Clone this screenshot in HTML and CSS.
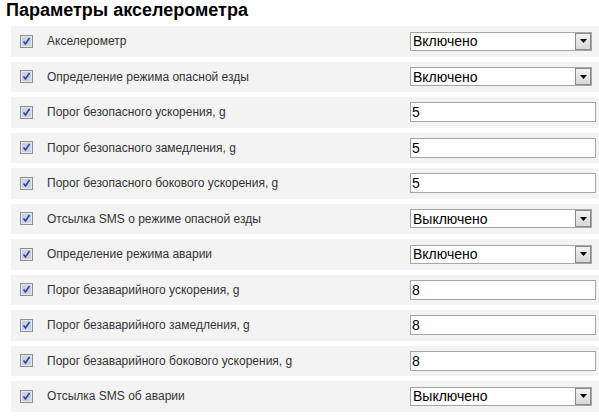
FILE: index.html
```html
<!DOCTYPE html>
<html lang="ru">

<head>
    <meta charset="UTF-8">
    <title>Параметры акселерометра</title>
    <link rel="stylesheet" href="styles.css">
</head>

<body>
    <h1>Параметры акселерометра</h1>

    <div class="params">
        <div class="row">
            <span class="check"><svg width="13" height="13" viewBox="0 0 13 13"><rect x="0.5" y="0.5" width="12" height="12" fill="#e4e7ec" stroke="#8c8f94"/><rect x="2" y="2" width="9" height="9" fill="#ccd2dc"/><path d="M3.5 6.5 L5.5 9 L9.5 3" fill="none" stroke="#2a3fb5" stroke-width="1.6"/></svg></span>
            <span class="label">Акселерометр</span>
            <div class="select"><span>Включено</span><span class="arrow"><svg width="7" height="4" viewBox="0 0 7 4"><path d="M0 0 H7 L3.5 4 Z" fill="#000"/></svg></span></div>
        </div>
        <div class="row">
            <span class="check"><svg width="13" height="13" viewBox="0 0 13 13"><rect x="0.5" y="0.5" width="12" height="12" fill="#e4e7ec" stroke="#8c8f94"/><rect x="2" y="2" width="9" height="9" fill="#ccd2dc"/><path d="M3.5 6.5 L5.5 9 L9.5 3" fill="none" stroke="#2a3fb5" stroke-width="1.6"/></svg></span>
            <span class="label">Определение режима опасной езды</span>
            <div class="select"><span>Включено</span><span class="arrow"><svg width="7" height="4" viewBox="0 0 7 4"><path d="M0 0 H7 L3.5 4 Z" fill="#000"/></svg></span></div>
        </div>
        <div class="row">
            <span class="check"><svg width="13" height="13" viewBox="0 0 13 13"><rect x="0.5" y="0.5" width="12" height="12" fill="#e4e7ec" stroke="#8c8f94"/><rect x="2" y="2" width="9" height="9" fill="#ccd2dc"/><path d="M3.5 6.5 L5.5 9 L9.5 3" fill="none" stroke="#2a3fb5" stroke-width="1.6"/></svg></span>
            <span class="label">Порог безопасного ускорения, g</span>
            <input class="field" type="text" value="5">
        </div>
        <div class="row">
            <span class="check"><svg width="13" height="13" viewBox="0 0 13 13"><rect x="0.5" y="0.5" width="12" height="12" fill="#e4e7ec" stroke="#8c8f94"/><rect x="2" y="2" width="9" height="9" fill="#ccd2dc"/><path d="M3.5 6.5 L5.5 9 L9.5 3" fill="none" stroke="#2a3fb5" stroke-width="1.6"/></svg></span>
            <span class="label">Порог безопасного замедления, g</span>
            <input class="field" type="text" value="5">
        </div>
        <div class="row">
            <span class="check"><svg width="13" height="13" viewBox="0 0 13 13"><rect x="0.5" y="0.5" width="12" height="12" fill="#e4e7ec" stroke="#8c8f94"/><rect x="2" y="2" width="9" height="9" fill="#ccd2dc"/><path d="M3.5 6.5 L5.5 9 L9.5 3" fill="none" stroke="#2a3fb5" stroke-width="1.6"/></svg></span>
            <span class="label">Порог безопасного бокового ускорения, g</span>
            <input class="field" type="text" value="5">
        </div>
        <div class="row">
            <span class="check"><svg width="13" height="13" viewBox="0 0 13 13"><rect x="0.5" y="0.5" width="12" height="12" fill="#e4e7ec" stroke="#8c8f94"/><rect x="2" y="2" width="9" height="9" fill="#ccd2dc"/><path d="M3.5 6.5 L5.5 9 L9.5 3" fill="none" stroke="#2a3fb5" stroke-width="1.6"/></svg></span>
            <span class="label">Отсылка SMS о режиме опасной езды</span>
            <div class="select"><span>Выключено</span><span class="arrow"><svg width="7" height="4" viewBox="0 0 7 4"><path d="M0 0 H7 L3.5 4 Z" fill="#000"/></svg></span></div>
        </div>
        <div class="row">
            <span class="check"><svg width="13" height="13" viewBox="0 0 13 13"><rect x="0.5" y="0.5" width="12" height="12" fill="#e4e7ec" stroke="#8c8f94"/><rect x="2" y="2" width="9" height="9" fill="#ccd2dc"/><path d="M3.5 6.5 L5.5 9 L9.5 3" fill="none" stroke="#2a3fb5" stroke-width="1.6"/></svg></span>
            <span class="label">Определение режима аварии</span>
            <div class="select"><span>Включено</span><span class="arrow"><svg width="7" height="4" viewBox="0 0 7 4"><path d="M0 0 H7 L3.5 4 Z" fill="#000"/></svg></span></div>
        </div>
        <div class="row">
            <span class="check"><svg width="13" height="13" viewBox="0 0 13 13"><rect x="0.5" y="0.5" width="12" height="12" fill="#e4e7ec" stroke="#8c8f94"/><rect x="2" y="2" width="9" height="9" fill="#ccd2dc"/><path d="M3.5 6.5 L5.5 9 L9.5 3" fill="none" stroke="#2a3fb5" stroke-width="1.6"/></svg></span>
            <span class="label">Порог безаварийного ускорения, g</span>
            <input class="field" type="text" value="8">
        </div>
        <div class="row">
            <span class="check"><svg width="13" height="13" viewBox="0 0 13 13"><rect x="0.5" y="0.5" width="12" height="12" fill="#e4e7ec" stroke="#8c8f94"/><rect x="2" y="2" width="9" height="9" fill="#ccd2dc"/><path d="M3.5 6.5 L5.5 9 L9.5 3" fill="none" stroke="#2a3fb5" stroke-width="1.6"/></svg></span>
            <span class="label">Порог безаварийного замедления, g</span>
            <input class="field" type="text" value="8">
        </div>
        <div class="row">
            <span class="check"><svg width="13" height="13" viewBox="0 0 13 13"><rect x="0.5" y="0.5" width="12" height="12" fill="#e4e7ec" stroke="#8c8f94"/><rect x="2" y="2" width="9" height="9" fill="#ccd2dc"/><path d="M3.5 6.5 L5.5 9 L9.5 3" fill="none" stroke="#2a3fb5" stroke-width="1.6"/></svg></span>
            <span class="label">Порог безаварийного бокового ускорения, g</span>
            <input class="field" type="text" value="8">
        </div>
        <div class="row">
            <span class="check"><svg width="13" height="13" viewBox="0 0 13 13"><rect x="0.5" y="0.5" width="12" height="12" fill="#e4e7ec" stroke="#8c8f94"/><rect x="2" y="2" width="9" height="9" fill="#ccd2dc"/><path d="M3.5 6.5 L5.5 9 L9.5 3" fill="none" stroke="#2a3fb5" stroke-width="1.6"/></svg></span>
            <span class="label">Отсылка SMS об аварии</span>
            <div class="select"><span>Выключено</span><span class="arrow"><svg width="7" height="4" viewBox="0 0 7 4"><path d="M0 0 H7 L3.5 4 Z" fill="#000"/></svg></span></div>
        </div>
    </div>
</body>

</html>
```

FILE: styles.css
```css
body {
    margin: 0;
    padding: 0;
    background: #ffffff;
    font-family: "Liberation Sans", Arial, sans-serif;
    overflow: hidden;
}

h1 {
    margin: 0;
    padding: 0 0 0 6px;
    height: 21px;
    font-size: 18px;
    line-height: 21px;
    font-weight: bold;
    color: #000;
}

.params {
    padding-left: 11px;
}

.row {
    display: flex;
    align-items: center;
    height: 30.5px;
    margin-top: 5px;
    background: #f3f3f3;
}

.check {
    display: flex;
    width: 13px;
    height: 13px;
    margin-left: 9px;
}

.label {
    width: 363px;
    margin-left: 14px;
    font-size: 12px;
    color: #333;
}

.select {
    box-sizing: border-box;
    display: flex;
    align-items: center;
    justify-content: space-between;
    width: 182px;
    height: 19px;
    padding-left: 2px;
    border: 1px solid #a5a5a5;
    background: #fff;
    font-size: 14px;
    color: #000;
}

.arrow {
    box-sizing: border-box;
    display: flex;
    align-items: center;
    justify-content: center;
    width: 16px;
    height: 17px;
    border: 1px solid #8a8a8a;
    background: linear-gradient(#f2f2f2, #d8d8d8);
}

.field {
    box-sizing: border-box;
    width: 186px;
    height: 20px;
    margin: 0;
    padding: 0 1px;
    border: 1px solid #a5a5a5;
    background: #fff;
    font-family: "Liberation Sans", Arial, sans-serif;
    font-size: 14px;
    color: #000;
    outline: none;
}
```
